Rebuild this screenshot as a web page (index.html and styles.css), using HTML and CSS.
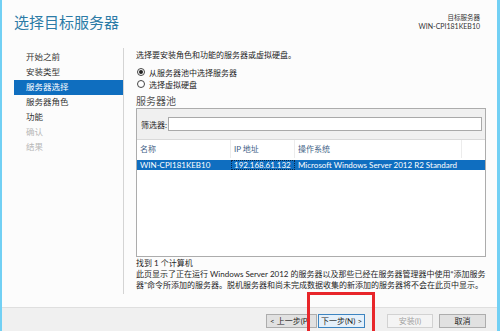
FILE: index.html
```html
<!DOCTYPE html>
<html lang="zh-CN">
<head>
  <meta charset="UTF-8" />
  <title>选择目标服务器</title>
  <link rel="stylesheet" href="styles.css">
</head>
<body>

  <div class="window">
    <div class="header">
      <h1 class="title">选择目标服务器</h1>
      <div class="target">
        <div class="target-label">目标服务器</div>
        <div class="target-name">WIN-CPI181KEB10</div>
      </div>
    </div>

    <div class="main">
      <ul class="nav">
        <li>开始之前</li>
        <li>安装类型</li>
        <li class="active">服务器选择</li>
        <li>服务器角色</li>
        <li>功能</li>
        <li class="disabled">确认</li>
        <li class="disabled">结果</li>
      </ul>

      <div class="content">
        <p class="intro">选择要安装角色和功能的服务器或虚拟硬盘。</p>

        <div class="radios">
          <div class="radio-row"><span class="radio checked"></span>从服务器池中选择服务器</div>
          <div class="radio-row"><span class="radio"></span>选择虚拟硬盘</div>
        </div>

        <div class="pool-title">服务器池</div>

        <div class="pool">
          <div class="filter">
            <span class="filter-label">筛选器:</span>
            <div class="filter-input"></div>
          </div>
          <div class="table">
            <div class="row head">
              <div class="cell">名称</div>
              <div class="cell">IP 地址</div>
              <div class="cell">操作系统</div>
              <div class="cell"></div>
            </div>
            <div class="row selected">
              <div class="cell">WIN-CPI181KEB10</div>
              <div class="cell focus">192.168.61.132</div>
              <div class="cell">Microsoft Windows Server 2012 R2 Standard</div>
              <div class="cell"></div>
            </div>
          </div>
        </div>

        <div class="found">找到 1 个计算机</div>
        <p class="note">此页显示了正在运行 Windows Server 2012 的服务器以及那些已经在服务器管理器中使用“添加服务器”命令所添加的服务器。脱机服务器和尚未完成数据收集的新添加的服务器将不会在此页中显示。</p>
      </div>
    </div>

    <div class="spacer"></div>

    <div class="footer">
      <button class="btn prev">&lt; 上一步(P)</button>
      <button class="btn next">下一步(N) &gt;</button>
      <button class="btn install" disabled>安装(I)</button>
      <button class="btn cancel">取消</button>
    </div>

    <div class="highlight"></div>
  </div>

</body>
</html>
```

FILE: styles.css
```css
* {
  margin: 0;
  padding: 0;
  box-sizing: border-box;
  font-family: 'Lato', 'Noto Sans CJK SC', sans-serif;
}

body {
  width: 500px;
  height: 331px;
  overflow: hidden;
  background-color: #fcfcfc;
  color: #1e1e1e;
}

.window {
  position: relative;
  display: flex;
  flex-direction: column;
  height: 331px;
  border-left: 2px solid #72d0f4;
  border-right: 3px solid #72d0f4;
  background-color: #fcfcfc;
}

/* header */
.header {
  height: 48px;
  display: flex;
  justify-content: space-between;
  padding: 0 17px 0 12px;
}

.title {
  font-weight: normal;
  font-size: 15px;
  line-height: 20px;
  padding-top: 12px;
  color: #2c7ba6;
}

.target {
  padding-top: 14px;
  text-align: right;
  font-size: 6.5px;
  line-height: 8px;
  color: #333;
}

.target-name {
  font-size: 7px;
}

/* body */
.main {
  height: 246px;
  display: flex;
}

.nav {
  list-style: none;
  width: 122px;
  flex-shrink: 0;
  border-right: 1px solid #d4d4d4;
  padding-top: 2px;
}

.nav li {
  margin-left: 12px;
  padding-left: 12px;
  height: 15px;
  line-height: 15px;
  font-size: 8.5px;
  color: #333;
}

.nav li.active {
  background-color: #0f6ebf;
  color: #fff;
}

.nav li.disabled {
  color: #b8b8b8;
}

.content {
  flex: 1;
  padding: 0 11px 0 12px;
  font-size: 8px;
}

.intro {
  line-height: 14px;
}

.radios {
  margin-top: 4px;
}

.radio-row {
  display: flex;
  align-items: center;
  height: 12px;
  padding-left: 1px;
}

.radio {
  width: 8px;
  height: 8px;
  border: 1px solid #444;
  border-radius: 50%;
  margin-right: 4px;
  display: flex;
  align-items: center;
  justify-content: center;
  background-color: #fff;
}

.radio.checked::after {
  content: "";
  width: 4px;
  height: 4px;
  border-radius: 50%;
  background-color: #222;
}

.pool-title {
  margin-top: 4px;
  line-height: 14px;
  font-size: 10px;
  color: #555;
}

.pool {
  height: 149px;
  border: 1px solid #acacac;
  background-color: #fff;
}

.filter {
  height: 31px;
  background-color: #f0f0f0;
  border-bottom: 1px solid #d9d9d9;
  display: flex;
  align-items: center;
  padding: 0 3px 0 4px;
}

.filter-label {
  width: 27px;
}

.filter-input {
  flex: 1;
  height: 14px;
  border: 1px solid #a9a9a9;
  background-color: #fff;
}

.row {
  display: grid;
  grid-template-columns: 94px 64px 167px 1fr;
}

.row.head {
  height: 18px;
  line-height: 18px;
  color: #3f5f86;
  margin-bottom: 2px;
}

.row.head .cell {
  border-right: 1px solid #ececec;
}

.row.head .cell:last-child {
  border-right: none;
}

.cell {
  padding-left: 3px;
  white-space: nowrap;
  overflow: hidden;
}

.row.selected {
  height: 10px;
  line-height: 10px;
  background-color: #0f6ec0;
  color: #fff;
}

.cell.focus {
  outline: 1px dotted #0a2a4a;
  outline-offset: -1px;
}

.found {
  line-height: 12px;
}

.note {
  line-height: 11px;
}

.spacer {
  height: 13px;
}

/* footer */
.footer {
  flex: 1;
  display: flex;
  justify-content: flex-end;
  align-items: flex-start;
  padding: 6px 11px 0 0;
  background-color: #f0f0f0;
  border-top: 1px solid #dfdfdf;
}

.btn {
  height: 14px;
  font-size: 8px;
  line-height: 12px;
  border: 1px solid #adadad;
  background-color: #e1e1e1;
  color: #1e1e1e;
  white-space: nowrap;
  overflow: hidden;
}

.prev {
  width: 51px;
  text-align: left;
  padding-left: 3px;
  margin-right: 1px;
}

.next {
  width: 47px;
  border-color: #3d84c0;
  background-color: #e5f0fa;
  margin-right: 22px;
}

.install {
  width: 46px;
  background-color: #f4f4f4;
  border-color: #d2d2d2;
  color: #a2a2a2;
  margin-right: 6px;
}

.cancel {
  width: 47px;
}

.highlight {
  position: absolute;
  left: 305px;
  top: 292px;
  width: 68px;
  height: 50px;
  border: 3px solid #e8262a;
}
```
